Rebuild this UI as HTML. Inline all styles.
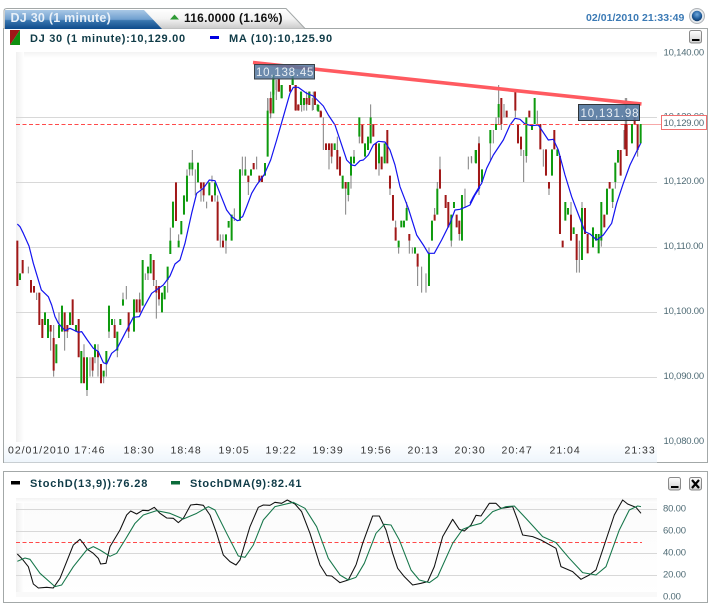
<!DOCTYPE html>
<html><head><meta charset="utf-8"><style>
html,body{margin:0;padding:0;background:#fff;width:712px;height:606px;overflow:hidden}
svg{position:absolute;left:0;top:0;display:block;filter:blur(.3px)}
text{font-family:"Liberation Sans",sans-serif}
.y{font-size:9.500px;fill:#4f6b75;letter-spacing:-.2px}
.x{font-size:10.500px;fill:#333;letter-spacing:.98px}
.l{font-size:11px;font-weight:bold;fill:#0f3b47;letter-spacing:.7px}
</style></head><body>
<svg width="712" height="606" viewBox="0 0 712 606" xmlns="http://www.w3.org/2000/svg">
<defs>
<linearGradient id="tb" x1="0" y1="0" x2="0" y2="1"><stop offset="0" stop-color="#a9c8e6"/><stop offset=".5" stop-color="#6f9fcf"/><stop offset=".55" stop-color="#3a77b0"/><stop offset="1" stop-color="#0d4a8a"/></linearGradient>
<linearGradient id="tg" x1="0" y1="0" x2="0" y2="1"><stop offset="0" stop-color="#fff"/><stop offset=".5" stop-color="#f3f3f3"/><stop offset="1" stop-color="#c9c9c9"/></linearGradient>
<linearGradient id="ax" x1="0" y1="0" x2="0" y2="1"><stop offset="0" stop-color="#fff"/><stop offset="1" stop-color="#eef5fc"/></linearGradient>
<linearGradient id="lf" x1="0" y1="0" x2="1" y2="0"><stop offset="0" stop-color="#f0f0f0"/><stop offset="1" stop-color="#fff"/></linearGradient>
<linearGradient id="tp" x1="0" y1="0" x2="0" y2="1"><stop offset="0" stop-color="#f3f3f3"/><stop offset="1" stop-color="#fff"/></linearGradient>
<linearGradient id="bt" x1="0" y1="0" x2="0" y2="1"><stop offset="0" stop-color="#fff"/><stop offset="1" stop-color="#cfcfcf"/></linearGradient>
<radialGradient id="gl" cx=".5" cy=".35" r=".6"><stop offset="0" stop-color="#6fa8dc"/><stop offset=".7" stop-color="#1f5c9c"/><stop offset="1" stop-color="#123f70"/></radialGradient>
</defs>
<!-- main panel -->
<rect x="3.5" y="28.5" width="704" height="434" fill="#fff" stroke="#a3a8a8"/>
<rect x="4" y="442" width="653" height="20.5" fill="url(#ax)"/>
<rect x="16" y="52" width="641" height="6" fill="url(#tp)"/>
<rect x="16" y="52" width="8" height="390" fill="url(#lf)"/>
<!-- tabs -->
<path d="M4 29V11Q4 8.500 7 8.500H286L305 28.500" fill="url(#tg)" stroke="#a3a8a8"/>
<path d="M5 29V10H144L162 29Z" fill="url(#tb)"/>
<text x="10.500" y="22" font-size="12.500" font-weight="bold" fill="#e8f0f8" letter-spacing=".25">DJ 30 (1 minute)</text>
<path d="M170 19.500L174.500 14.500L179 19.500Z" fill="#2f9a36"/>
<text x="184" y="22" font-size="12" font-weight="bold" fill="#111" letter-spacing=".25">116.0000 (1.16%)</text>
<text x="586" y="21" font-size="10.500" font-weight="bold" fill="#3b7ab5" letter-spacing=".05">02/01/2010 21:33:49</text>
<circle cx="697" cy="16" r="7.500" fill="#e4e8ec" stroke="#b0b4b8"/>
<circle cx="697" cy="16" r="5.200" fill="url(#gl)"/>
<!-- legend -->
<path d="M10 30H20L10 45Z" fill="#a01818"/><path d="M20 30V45H10Z" fill="#109010"/>
<text class="l" x="30" y="42">DJ 30 (1 minute):10,129.00</text>
<rect x="210" y="36" width="9" height="3" fill="#0000e0"/>
<text class="l" x="229" y="42">MA (10):10,125.90</text>
<!-- grid -->
<path d="M16 117.500H657M16 182.500H657M16 247.500H657M16 312.500H657M16 377.500H657" stroke="#d8d8d8" stroke-width="1"/>
<path d="M640 124.500H661" stroke="#f7a8a8"/>
<!-- wicks -->
<g fill="none" stroke="#808080" stroke-width="3">
<g transform="translate(0 120)" id="w1"><path d="M85 440V460M110 518V540M152 635V692M161 615V770M177 577V654M194 635V692M202 635V654M252 673V712M261 810V828M270 712V770M278 752V770M285 712V730M294 673V770M311 770V790M319 732V770M327 635V654M344 597V615M352 692V712M369 518V538M379 498V538M386 635V654M419 518V538M436 460V480M444 460V480M461 480V498M469 480V596M477 538V557M503 480V518M511 323V362M536 343V362M561 148V167M569 148V167M577 90V167M586 148V226M603 206V245M611 226V245M620 245V265M636 167V187M645 226V245M653 226V245M661 343V382M669 343V362M678 362V401M703 265V303" transform="scale(.3333)" stroke-width="3"/></g>
<g transform="translate(240 80) scale(.3333)"><path d="M7 230V287M16 230V268M25 306V345M50 230V268M83 54V92M92 35V112M108 0V30M200 73V92M192 73V92M217 54V92M250 112V210M267 210V268M275 230V250M292 170V210M317 326V404M325 345V364M333 287V326M342 210V230M358 170V190M392 73V112M417 250V287M450 326V345M467 422V442M476 502V521M500 366V384M508 482V521M517 502V521M533 560V618M545 560V638M558 580V638M567 502V521M584 384V404M592 306V326M600 230V268M634 482V500M658 462V482M675 326V384M685 230V268M695 230V250M717 170V190"/></g>
<g transform="translate(470 80) scale(.3333)"><path d="M4 228V248M27 170V190M27 326V345M61 190V240M70 150V190M78 112V132M86 15V72M86 112V132M94 132V150M102 72V112M136 92V112M153 208V228M161 210V306M169 228V248M202 92V132M220 208V260M237 326V345M303 366V404M320 540V578M328 482V578M336 366V384M394 482V500M428 366V384M436 306V326M462 150V208M466 54V132M470 54V228M494 90V112M503 210V230"/></g>
<g transform="scale(.3333)"><path d="M804 295V355M812 340V355M829 240V300M905 275V335M920 275V315M940 275V330"/></g>
</g>
<!-- red bodies -->
<g fill="none" stroke="#a01818" stroke-width="2">
<g transform="translate(0 120) scale(.3333)" stroke-width="6"><path d="M52 362V498M68 420V460M93 480V518M102 498V518M118 518V615M127 597V654M152 615V635M161 654V752M194 577V635M202 615V635M218 538V615M236 597V712M252 712V790M278 712V752M294 693V712M303 732V790M344 615V654M386 577V635M410 538V577M419 538V577M461 420V480M469 498V518M477 498V538M528 187V303M603 187V206M611 187V226M636 226V245M653 245V362M669 362V382"/></g>
<g transform="translate(240 80) scale(.3333)" stroke-width="6"><path d="M25 287V306M41 249V268M58 287V306M66 287V306M92 54V92M116 0V35M150 15V35M167 15V92M175 73V92M192 54V73M200 54V73M225 35V73M242 92V112M258 190V210M267 190V210M275 190V230M292 210V268M300 230V287M317 306V326M367 132V190M400 132V170M408 190V268M425 230V268M442 150V250M450 287V326M459 345V422M467 442V482M508 462V482M533 521V560M584 404V422M600 268V326M617 345V384M625 366V442M650 404V442M658 422V462M717 190V326"/></g>
<g transform="translate(470 80) scale(.3333)" stroke-width="6"><path d="M27 190V326M94 54V132M110 92V112M136 34V92M144 132V190M153 170V208M178 92V112M211 132V208M228 208V287M237 306V326M253 150V208M270 228V462M278 482V502M303 404V482M320 462V540M345 384V462M353 462V520M403 404V442M419 306V326M452 210V287M466 132V208M470 132V228M494 112V132M503 132V210"/></g>
<g transform="scale(.3333)" stroke-width="6"><path d="M812 295V340M837 235V275M870 255V275M887 255V330M895 315V330M928 275V315M945 275V315M963 335V350"/></g>
</g>
<!-- green bodies -->
<g fill="none" stroke="#0e9a0e" stroke-width="2">
<g transform="translate(0 120) scale(.3333)" stroke-width="6"><path d="M60 460V480M135 577V615M144 597V654M169 673V730M177 615V654M186 557V635M210 577V615M228 615V635M244 693V790M261 712V810M285 673V712M311 752V770M319 693V732M327 557V635M336 597V615M352 635V692M361 597V615M369 538V557M402 538V635M428 420V557M444 440V460M452 402V460M486 518V577M494 498V538M503 440V480M511 362V402M519 245V323M536 362V382M544 303V343M552 226V284M561 167V245M569 128V148M577 128V148M594 128V187M628 187V226M645 187V226M678 343V362M686 303V323M695 284V362M720 148V300"/></g>
<g transform="translate(240 80) scale(.3333)" stroke-width="6"><path d="M0 268V422M16 268V287M33 268V287M75 249V287M83 92V230M100 0V44M125 15V54M158 0V15M183 35V73M208 35V54M233 73V92M284 190V210M308 287V326M325 306V345M333 230V287M342 230V250M358 112V170M375 190V230M384 170V210M392 112V190M417 190V250M434 190V250M476 482V502M484 422V442M492 422V442M500 384V422M525 502V521M567 521V618M576 422V482M592 326V404M634 404V482M642 366V384M666 345V482M708 210V250"/></g>
<g transform="translate(470 80) scale(.3333)" stroke-width="6"><path d="M17 210V248M36 268V306M61 150V190M78 132V150M86 72V112M169 112V228M186 132V150M194 54V132M246 208V287M262 208V228M286 366V422M294 384V404M311 442V462M336 384V540M369 442V502M378 462V482M386 462V520M394 366V482M411 326V404M428 326V366M436 248V306M444 210V248M486 132V190M512 132V190"/></g>
<g transform="scale(.3333)" stroke-width="6"><path d="M820 225V340M845 255V295M878 225V255M903 275V315M912 295V315M955 315V335"/></g>
</g>
<!-- MA -->
<g fill="none" stroke="#1414f0" stroke-width="3.600" stroke-linejoin="round">
<path transform="translate(0 120) scale(.3333)" d="M52 312L60 320 70 340 87 378 100 430 124 510 145 530 155 555 165 590 175 610 195 632 210 625 235 637 245 635 262 660 280 685 295 695 310 728 320 732 335 700 350 688 375 640 400 592 418 590 430 565 455 520 490 495 510 468 525 432 540 420 555 370 575 280 590 220 610 205 628 180 645 182 660 220 680 270 695 290 712 302 720 300"/>
<path transform="translate(240 80) scale(.3333)" d="M0 414L8 410 20 380 35 340 50 315 72 285 92 240 110 180 130 110 150 40 160 22 175 22 200 40 220 48 250 78 265 105 285 135 300 180 320 240 335 255 345 257 360 242 370 240 385 225 400 195 415 184 435 186 450 210 465 255 480 320 505 385 530 465 550 495 565 520 583 520 605 480 630 430 645 390 660 388 675 382 690 375 705 345 720 322"/>
<path transform="translate(470 80) scale(.3333)" d="M0 370L10 350 25 325 35 310 50 265 70 225 100 180 120 135 135 115 150 118 165 132 185 137 205 135 235 180 250 178 265 210 285 285 305 350 320 390 345 455 360 462 380 480 400 465 425 430 440 370 460 310 480 255 497 220 512 190"/>
</g>
<path d="M16 124.500H640" stroke="#ff4a4a" stroke-dasharray="4 2.500" fill="none"/>
<!-- trend -->
<path d="M253 62.500L641.500 104" stroke="#ff5a60" stroke-width="3.600" fill="none"/>
<!-- callouts -->
<rect x="254.500" y="64.500" width="60" height="14.500" fill="#53779f" fill-opacity=".85" stroke="#3a4248"/>
<text x="256" y="76" font-size="11.500" fill="#e8eef4" letter-spacing=".78">10,138.45</text>
<rect x="578.500" y="104.500" width="61" height="16" fill="#53779f" fill-opacity=".9" stroke="#2f3438"/>
<text x="580.500" y="117" font-size="11.500" fill="#e8eef4" letter-spacing=".85">10,131.98</text>
<!-- y labels -->
<text class="y" x="663.500" y="55.500">10,140.00</text>
<text class="y" x="663.500" y="119.500">10,130.00</text>
<rect x="661.500" y="115.500" width="45" height="14" fill="#fff" stroke="#f07070"/>
<text class="y" x="663.500" y="126">10,129.00</text>
<text class="y" x="663.500" y="184">10,120.00</text>
<text class="y" x="663.500" y="249">10,110.00</text>
<text class="y" x="663.500" y="314">10,100.00</text>
<text class="y" x="663.500" y="379">10,090.00</text>
<text class="y" x="663.500" y="444">10,080.00</text>
<!-- x labels -->
<text class="x" x="8" y="453.500">02/01/2010 17:46</text>
<text class="x" x="123.500" y="453.500">18:30</text>
<text class="x" x="170.500" y="453.500">18:48</text>
<text class="x" x="218.500" y="453.500">19:05</text>
<text class="x" x="265.500" y="453.500">19:22</text>
<text class="x" x="312.500" y="453.500">19:39</text>
<text class="x" x="360.500" y="453.500">19:56</text>
<text class="x" x="407.500" y="453.500">20:13</text>
<text class="x" x="454.500" y="453.500">20:30</text>
<text class="x" x="501.500" y="453.500">20:47</text>
<text class="x" x="549.500" y="453.500">21:04</text>
<text class="x" x="624.500" y="453.500">21:33</text>
<!-- main min button -->
<rect x="689.500" y="30.500" width="12" height="12.500" rx="2" fill="url(#bt)" stroke="#8a8a8a"/>
<rect x="692" y="39" width="7.500" height="2" fill="#000"/>
<!-- lower panel -->
<rect x="3.500" y="471.500" width="704" height="131" fill="#fff" stroke="#a3a8a8"/>
<rect x="16" y="498" width="641" height="99" fill="url(#tp)" fill-opacity=".35"/>
<rect x="16" y="498" width="8" height="99" fill="url(#lf)"/>
<rect x="16" y="498" width="641" height="5" fill="url(#tp)"/>
<rect x="16" y="592" width="641" height="5" fill="#f9f9f9"/>
<path d="M16 509.500H657M16 531.500H657M16 553.500H657M16 575.500H657" stroke="#d8d8d8"/>
<path d="M16 542.500H642" stroke="#ff4a4a" stroke-dasharray="4 2.500" fill="none"/>
<g fill="none" stroke-width="3.200" stroke-linejoin="round">
<path stroke="#111" transform="translate(0 430) scale(.3333)" d="M52 372L65 385 85 410 100 462 115 474 140 472 160 474 180 445 200 395 220 345 240 328 250 340 262 358 280 370 295 385 302 402 318 400 330 350 360 300 380 255 392 243 410 252 428 241 445 242 463 232 480 250 500 264 520 265 535 278 550 265 572 225 590 223 610 226 630 255 650 310 670 375 690 395 708 405 720 390 750 290 775 232 790 225 810 226 825 217 845 220 862 210 885 222 905 245 930 310 960 405 980 437 995 438 1020 458 1045 450 1068 405"/>
<path stroke="#111" transform="translate(356 430) scale(.3333)" d="M0 405L20 340 50 258 70 258 90 300 110 370 125 415 145 440 170 465 195 460 215 455 235 410 260 320 290 268 310 298 325 303 345 285 360 256 375 258 400 220 420 220 435 235 470 230 485 270 500 315 530 320 555 330 600 355 615 410 650 425 675 448 700 435 720 420 745 345 775 255 800 210 815 222 840 232 855 250"/>
<path stroke="#16764a" transform="translate(0 430) scale(.3333)" d="M52 394L75 384 90 388 120 430 165 470 185 465 220 410 260 360 280 350 300 360 330 379 350 370 375 330 405 280 430 255 470 242 510 250 550 267 590 250 625 230 645 240 680 310 715 378 735 382 760 345 790 270 825 230 880 217 915 235 950 290 985 385 1020 435 1045 450 1068 442"/>
<path stroke="#16764a" transform="translate(356 430) scale(.3333)" d="M0 442L25 400 60 310 85 283 105 285 130 330 165 420 190 450 220 458 245 440 290 340 320 298 345 288 375 280 410 245 450 230 475 228 510 265 560 320 600 338 640 385 680 428 720 435 750 410 790 300 820 240 845 228 855 230"/>
</g>
<rect x="11" y="481" width="9" height="3.500" fill="#000"/>
<text class="l" x="30" y="487" style="letter-spacing:.85px">StochD(13,9)):76.28</text>
<rect x="171" y="481" width="9" height="3.500" fill="#0b6b3a"/>
<text class="l" x="190" y="487">StochDMA(9):82.41</text>
<rect x="668.500" y="477.500" width="12" height="12.500" rx="2" fill="url(#bt)" stroke="#8a8a8a"/>
<rect x="671" y="486" width="7.500" height="2" fill="#000"/>
<rect x="689.500" y="477.500" width="12" height="12.500" rx="2" fill="url(#bt)" stroke="#8a8a8a"/>
<path d="M692 480L699 488M699 480L692 488" stroke="#000" stroke-width="2.200"/>
<text class="y" x="663" y="511.500">80.00</text>
<text class="y" x="663" y="533.500">60.00</text>
<text class="y" x="663" y="555.500">40.00</text>
<text class="y" x="663" y="577.500">20.00</text>
<text class="y" x="663" y="599.500">0.00</text>
</svg>
</body></html>
